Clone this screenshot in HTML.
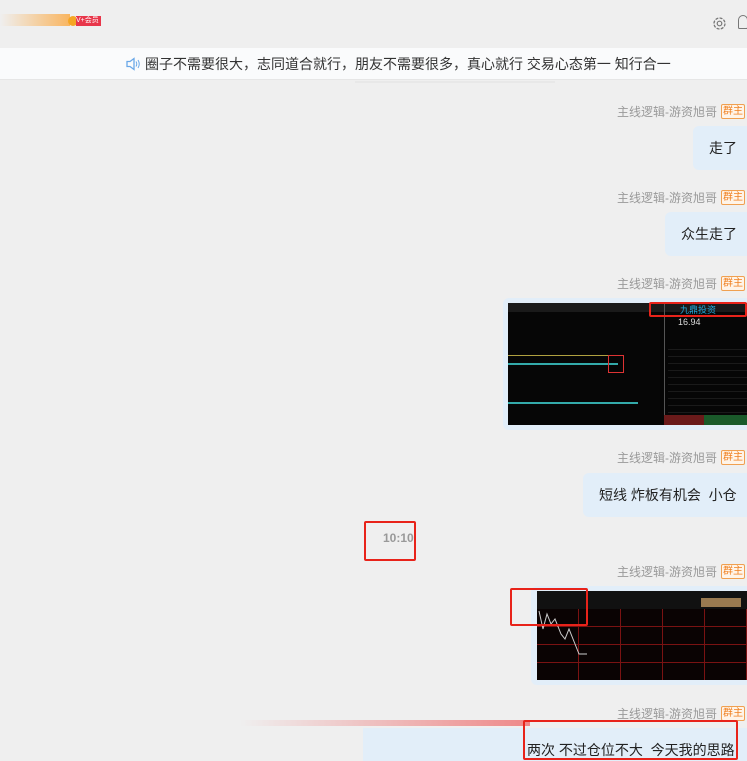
<!DOCTYPE html>
<html><head><meta charset="utf-8"><style>
body{margin:0;width:747px;height:761px;overflow:hidden;background:#efefef;font-family:"Liberation Sans","Noto Sans CJK SC",sans-serif;position:relative}
.a{position:absolute}
.name{position:absolute;right:30px;font-size:12px;color:#999;white-space:nowrap}
.badge{position:absolute;right:2px;width:22px;height:13px;border:1px solid #f0a050;color:#f08020;background:#fff4e8;font-size:10px;line-height:13px;text-align:center;border-radius:2px;margin-top:1px}
.bub{position:absolute;right:0;background:#e2eef9;border-radius:6px 0 0 6px;font-size:14px;color:#222;line-height:44px;box-sizing:border-box;padding-left:16px}
.red{position:absolute;border:2px solid #e8231a;border-radius:2px;box-sizing:border-box}
</style></head><body>
<div class="a" style="left:0;top:14px;width:70px;height:12px;background:linear-gradient(90deg,rgba(255,200,120,0),#f9b560)"></div>
<div class="a" style="left:68px;top:16px;width:10px;height:10px;border-radius:50%;background:#f5a623"></div>
<div class="a" style="left:76px;top:16px;width:25px;height:10px;background:#e8364a;color:#fff;font-size:7px;line-height:10px">V+会员</div>
<svg class="a" style="left:711px;top:15px" width="17" height="17" viewBox="0 0 17 17"><circle cx="8.5" cy="8.5" r="5.5" fill="none" stroke="#777" stroke-width="1.3" stroke-dasharray="3 1.3"/><circle cx="8.5" cy="8.5" r="2.3" fill="none" stroke="#777" stroke-width="1.2"/></svg>
<div class="a" style="left:738px;top:15px;width:10px;height:14px;border:1.3px solid #777;border-radius:6px 6px 2px 2px;box-sizing:border-box"></div>
<div class="a" style="left:0;top:48px;width:747px;height:31px;background:#fafbfc;border-bottom:1px solid #e6e6e6"></div>
<svg class="a" style="left:125px;top:56px" width="16" height="16" viewBox="0 0 16 16"><path d="M2 5.5h3l4-3v11l-4-3H2z" fill="none" stroke="#6aa8e8" stroke-width="1.3"/><path d="M11 5.5q1.5 2.5 0 5M13 4q2.5 4 0 8" fill="none" stroke="#6aa8e8" stroke-width="1"/></svg>
<div class="a" style="left:145px;top:55px;font-size:14px;color:#333;line-height:18px;white-space:nowrap">圈子不需要很大，志同道合就行，朋友不需要很多，真心就行 交易心态第一 知行合一</div>
<div class="a" style="left:355px;top:81px;width:200px;height:2px;background:#e8e8e8"></div>

<div class="name" style="top:103px">主线逻辑-游资旭哥</div><div class="badge" style="top:103px">群主</div>
<div class="bub" style="top:126px;width:54px">走了</div>
<div class="name" style="top:189px">主线逻辑-游资旭哥</div><div class="badge" style="top:189px">群主</div>
<div class="bub" style="top:212px;width:82px">众生走了</div>
<div class="name" style="top:275px">主线逻辑-游资旭哥</div><div class="badge" style="top:275px">群主</div>
<div class="a" style="left:503px;top:298px;width:244px;height:132px;background:#e2eef9;border-radius:6px 0 0 6px"></div>
<div class="a" style="left:508px;top:303px;width:239px;height:122px;background:#060606">
 <div class="a" style="left:0;top:0;width:239px;height:9px;background:#1a1a1a"></div>
 <div class="a" style="left:156px;top:0;width:1px;height:122px;background:#555"></div>
 <div class="a" style="left:0;top:52px;width:110px;height:1px;background:#b0a040"></div>
 <div class="a" style="left:0;top:60px;width:110px;height:2px;background:#3aa"></div>
 <div class="a" style="left:0;top:99px;width:130px;height:2px;background:#3aa"></div>
 <div class="a" style="left:100px;top:52px;width:14px;height:16px;border:1px solid #d33"></div>
 <div class="a" style="left:170px;top:14px;width:40px;height:9px;color:#ddd;font-size:9px">16.94</div>
 <div class="a" style="left:160px;top:40px;width:79px;height:70px;background:repeating-linear-gradient(#060606 0 6px,#1a1a1a 6px 7px)"></div>
 <div class="a" style="left:156px;top:112px;width:40px;height:10px;background:#6a1a1a"></div>
 <div class="a" style="left:196px;top:112px;width:43px;height:10px;background:#1a5a2a"></div>
</div>
<div class="red" style="left:649px;top:302px;width:98px;height:15px"></div>
<div class="a" style="left:680px;top:303px;font-size:9px;color:#2ad;">九鼎投资</div>
<div class="name" style="top:449px">主线逻辑-游资旭哥</div><div class="badge" style="top:449px">群主</div>
<div class="bub" style="top:473px;width:164px">短线 炸板有机会&nbsp;&nbsp;小仓</div>
<div class="a" style="left:383px;top:531px;font-size:12px;color:#999;font-weight:bold">10:10</div>
<div class="red" style="left:364px;top:521px;width:52px;height:40px"></div>
<div class="name" style="top:563px">主线逻辑-游资旭哥</div><div class="badge" style="top:563px">群主</div>
<div class="a" style="left:531px;top:586px;width:216px;height:99px;background:#e2eef9;border-radius:6px 0 0 6px"></div>
<div class="a" style="left:537px;top:591px;width:210px;height:89px;background:#0a0303;background-image:repeating-linear-gradient(90deg,transparent 0 41px,#7a1212 41px 42px),repeating-linear-gradient(transparent 0 17px,#7a1212 17px 18px)">
 <div class="a" style="left:0;top:0;width:210px;height:18px;background:#111"></div>
 <div class="a" style="left:164px;top:7px;width:40px;height:9px;background:#9a7a50"></div>
 <svg class="a" style="left:0;top:18px" width="60" height="50"><polyline points="2,2 6,20 10,5 14,15 18,10 24,25 28,30 32,20 38,35 42,45 50,45" fill="none" stroke="#ccc" stroke-width="1"/></svg>
</div>
<div class="red" style="left:510px;top:588px;width:78px;height:38px"></div>
<div class="name" style="top:705px">主线逻辑-游资旭哥</div><div class="badge" style="top:705px">群主</div>
<div class="a" style="left:240px;top:720px;width:290px;height:6px;background:linear-gradient(90deg,rgba(240,200,200,0),#e88)"></div>
<div class="a" style="left:363px;top:728px;width:384px;height:33px;background:#e2eef9"></div>
<div class="a" style="left:527px;top:740px;font-size:14px;color:#222;white-space:nowrap">两次 不过仓位不大&nbsp;&nbsp;今天我的思路</div>
<div class="red" style="left:523px;top:720px;width:215px;height:40px"></div>
</body></html>
